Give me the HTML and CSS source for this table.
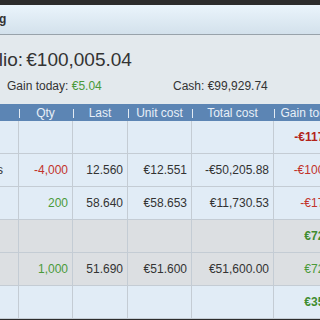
FILE: index.html
```
<!DOCTYPE html>
<html>
<head>
<meta charset="utf-8">
<link rel="stylesheet" href="styles.css">
</head>
<body>
<div class="topbar"></div>
<div class="titlebar"><span class="title">Trading</span></div>
<div class="content">
  <div class="total">Portfolio: €100,005.04</div>
  <div class="stats">
    <span class="stat">Gain today: <span class="pos">€5.04</span></span>
    <span class="stat">Cash: €99,929.74</span>
  </div>
  <table class="grid">
    <colgroup>
      <col class="c-name"><col class="c-qty"><col class="c-last"><col class="c-unit"><col class="c-total"><col class="c-gain">
    </colgroup>
    <thead>
      <tr><th>Name</th><th>Qty</th><th>Last</th><th>Unit cost</th><th>Total cost</th><th>Gain today</th></tr>
    </thead>
    <tbody>
      <tr class="blue"><td></td><td></td><td></td><td></td><td></td><td class="neg b">-€117.96</td></tr>
      <tr class="blue"><td class="name">Stocks</td><td class="neg">-4,000</td><td>12.560</td><td>€12.551</td><td>-€50,205.88</td><td class="neg">-€100.00</td></tr>
      <tr class="blue"><td></td><td class="pos">200</td><td>58.640</td><td>€58.653</td><td>€11,730.53</td><td class="neg">-€17.96</td></tr>
      <tr class="gray"><td></td><td></td><td></td><td></td><td></td><td class="pos b">€72.50</td></tr>
      <tr class="gray"><td></td><td class="pos">1,000</td><td>51.690</td><td>€51.600</td><td>€51,600.00</td><td class="pos">€72.50</td></tr>
      <tr class="blue"><td></td><td></td><td></td><td></td><td></td><td class="pos b">€35.04</td></tr>
    </tbody>
  </table>
</div>
<div class="bottombar"></div>
</body>
</html>
```
FILE: styles.css
```
html, body {
  margin: 0;
  padding: 0;
}
body {
  width: 320px;
  height: 320px;
  overflow: hidden;
  background: #e3e9ed;
  font-family: "Liberation Sans", Arial, sans-serif;
  color: #333;
}
.topbar {
  height: 5px;
  background: #2c2c2c;
}
.titlebar {
  height: 29px;
  background: linear-gradient(#eaf4fb, #d3e1ec);
  border-bottom: 1px solid #98a2aa;
  overflow: hidden;
  white-space: nowrap;
}
.title {
  display: inline-block;
  margin-left: -37px;
  font-size: 12px;
  font-weight: bold;
  line-height: 29px;
  color: #333;
}
.content {
  padding-top: 14px;
  overflow: hidden;
}
.total {
  margin-left: -52px;
  font-size: 19px;
  line-height: 22px;
  word-spacing: -2px;
  white-space: nowrap;
  color: #333;
}
.stats {
  display: flex;
  margin-top: 8px;
  padding-left: 7px;
  font-size: 12px;
  line-height: 15px;
  white-space: nowrap;
}
.stat {
  flex: 0 0 166px;
}
.pos { color: #4a9a3a; }
.neg { color: #c2332b; }
.b { font-weight: bold; }
.b.neg { color: #b3221a; }
.b.pos { color: #3f8c2f; }
.grid {
  margin-top: 10px;
  margin-left: -100px;
  border-collapse: collapse;
  table-layout: fixed;
  width: 445px;
  font-size: 12px;
}
.c-name { width: 118px; }
.c-qty { width: 54px; }
.c-last { width: 55px; }
.c-unit { width: 64px; }
.c-total { width: 82px; }
.c-gain { width: 72px; }
.grid th {
  position: relative;
  height: 17px;
  padding: 0;
  background: #5c85b4;
  color: #e8eff7;
  font-weight: normal;
  text-align: center;
  white-space: nowrap;
  overflow: hidden;
}
.grid th + th::before {
  content: "";
  position: absolute;
  left: 0;
  top: 5px;
  height: 9px;
  border-left: 1px solid #e2eaf3;
}
.grid td {
  height: 32px;
  padding: 0 4px 0 0;
  border: 1px solid #c4ccd4;
  text-align: right;
  white-space: nowrap;
  overflow: hidden;
}
.grid td.name { padding-right: 15px; }
.grid tbody tr:first-child td { border-top: 0; }
.blue td { background: #e1ecf6; }
.gray td { background: #dcdfe2; }
.bottombar {
  height: 4px;
  background: #2c2c2c;
}
```
